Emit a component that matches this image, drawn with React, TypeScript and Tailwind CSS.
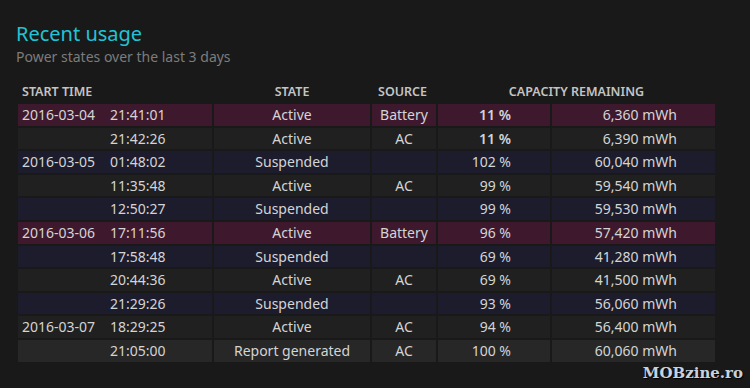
import React from "react";

type Row = {
  date?: string;
  time: string;
  state: string;
  source: string;
  pct: string;
  cap: string;
  kind: "pink" | "navy" | "dark" | "last";
  bold?: boolean;
};

const rows: Row[] = [
  { date: "2016-03-04", time: "21:41:01", state: "Active", source: "Battery", pct: "11 %", cap: "6,360 mWh", kind: "pink", bold: true },
  { time: "21:42:26", state: "Active", source: "AC", pct: "11 %", cap: "6,390 mWh", kind: "dark", bold: true },
  { date: "2016-03-05", time: "01:48:02", state: "Suspended", source: "", pct: "102 %", cap: "60,040 mWh", kind: "navy" },
  { time: "11:35:48", state: "Active", source: "AC", pct: "99 %", cap: "59,540 mWh", kind: "dark" },
  { time: "12:50:27", state: "Suspended", source: "", pct: "99 %", cap: "59,530 mWh", kind: "navy" },
  { date: "2016-03-06", time: "17:11:56", state: "Active", source: "Battery", pct: "96 %", cap: "57,420 mWh", kind: "pink" },
  { time: "17:58:48", state: "Suspended", source: "", pct: "69 %", cap: "41,280 mWh", kind: "navy" },
  { time: "20:44:36", state: "Active", source: "AC", pct: "69 %", cap: "41,500 mWh", kind: "dark" },
  { time: "21:29:26", state: "Suspended", source: "", pct: "93 %", cap: "56,060 mWh", kind: "navy" },
  { date: "2016-03-07", time: "18:29:25", state: "Active", source: "AC", pct: "94 %", cap: "56,400 mWh", kind: "dark" },
  { time: "21:05:00", state: "Report generated", source: "AC", pct: "100 %", cap: "60,060 mWh", kind: "last" },
];

const bgFor = (k: Row["kind"]) =>
  k === "pink" ? "bg-[#3e192e]" : k === "navy" ? "bg-[#1d1c2d]" : k === "last" ? "bg-[#272727]" : "bg-[#202020]";

export default function App() {
  return (
    <div
      className="w-[750px] h-[388px] bg-[#191919] relative overflow-hidden text-[#d4d4d4]"
      style={{ fontFamily: '"Noto Sans", "Open Sans", sans-serif' }}
    >
      <div className="pl-[16px] pt-[21px]">
        <div className="text-[20px] leading-[26px] text-[#20c4d6]">Recent usage</div>
        <div className="text-[14px] leading-[18px] text-[#7c7c7c] mt-[1px]">Power states over the last 3 days</div>
      </div>
      <div className="ml-[18px] mt-[16px] w-[697px]">
        <div className="flex gap-[2px] h-[20px] items-center text-[12.5px] font-semibold text-[#c4c4c4]">
          <div className="w-[194px] pl-[4px]">START TIME</div>
          <div className="w-[156px] text-center">STATE</div>
          <div className="w-[64px] pl-[6px]">SOURCE</div>
          <div className="flex-1 text-center">CAPACITY REMAINING</div>
        </div>
        <div className="flex flex-col gap-[2px] mt-[2px] text-[14px]">
          {rows.map((r, i) => {
            const bg = bgFor(r.kind);
            return (
              <div key={i} className="flex gap-[2px] h-[21.6px] leading-[21.6px]">
                <div className={`w-[194px] ${bg} pl-[4px] flex`}>
                  <span className="w-[88px]">{r.date ?? ""}</span>
                  <span>{r.time}</span>
                </div>
                <div className={`w-[156px] ${bg} text-center`}>{r.state}</div>
                <div className={`w-[64px] ${bg} text-center`}>{r.source}</div>
                <div className={`w-[112px] ${bg} text-right pr-[39px] ${r.bold ? "font-semibold" : ""}`}>{r.pct}</div>
                <div className={`w-[163px] ${bg} text-right pr-[38px]`}>{r.cap}</div>
              </div>
            );
          })}
        </div>
      </div>
      <div
        className="absolute right-[7px] bottom-[4px] text-[15px] font-bold text-[#c9d2dc] tracking-[0px]"
        style={{ fontFamily: '"DejaVu Serif", "Liberation Serif", serif', textShadow: "1px 1px 1px #000" }}
      >
        MOBzine.ro
      </div>
    </div>
  );
}
